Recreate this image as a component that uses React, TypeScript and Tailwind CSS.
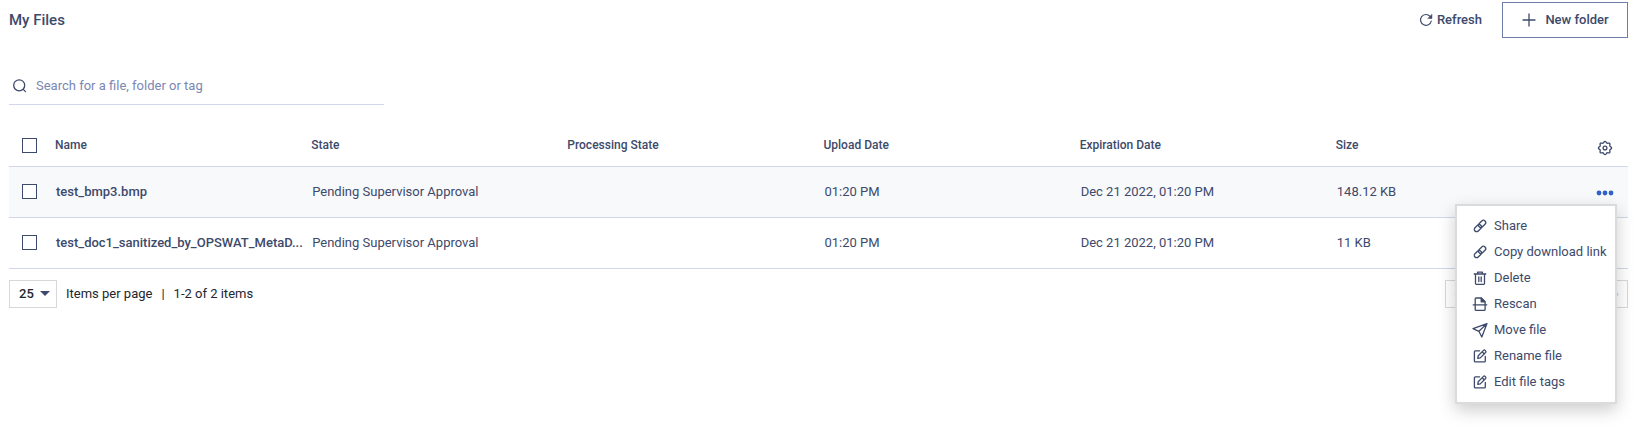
import { useState } from 'react'
import type { ReactNode } from 'react'

const Icon = ({ children, className = 'size-4' }: { children: ReactNode; className?: string }) => (
  <svg
    viewBox="0 0 16 16"
    fill="none"
    stroke="currentColor"
    strokeWidth="1.3"
    strokeLinecap="round"
    strokeLinejoin="round"
    aria-hidden="true"
    className={`shrink-0 ${className}`}
  >
    {children}
  </svg>
)

const RefreshIcon = () => (
  <Icon className="size-[14px]">
    <path d="M14 9.3A6.2 6.2 0 1 1 12.6 3.8L14 5.4" />
    <path d="M14.8 1.8v4.4h-4.4z" fill="currentColor" strokeWidth="0.6" />
  </Icon>
)

const PlusIcon = () => (
  <Icon>
    <path d="M8 2v12M2 8h12" />
  </Icon>
)

const SearchIcon = () => (
  <Icon>
    <circle cx="7.2" cy="7.3" r="5.5" />
    <path d="m11.3 11.4 2.2 2.2" />
  </Icon>
)

// Rounded gear outline: a circle whose radius swells at each of the 8 teeth
const gearPath = Array.from({ length: 96 }, (_, i) => {
  const angle = (i / 96) * Math.PI * 2
  const radius = 5.9 + 0.7 * Math.cos(angle * 8)
  return `${(8 + radius * Math.cos(angle)).toFixed(2)} ${(8 + radius * Math.sin(angle)).toFixed(2)}`
}).join('L')

const GearIcon = () => (
  <Icon>
    <path d={`M${gearPath}Z`} />
    <circle cx="8" cy="8" r="1.9" />
  </Icon>
)

const DotsIcon = () => (
  <Icon className="h-4 w-[18px]">
    <g fill="currentColor" stroke="none">
      <circle cx="2" cy="8" r="2.4" />
      <circle cx="8" cy="8" r="2.4" />
      <circle cx="14" cy="8" r="2.4" />
    </g>
  </Icon>
)

const LinkIcon = () => (
  <Icon>
    <g transform="rotate(-45 8 8)">
      <rect x="0.9" y="5.7" width="8.2" height="4.6" rx="2.3" />
      <rect x="6.9" y="5.7" width="8.2" height="4.6" rx="2.3" />
    </g>
  </Icon>
)

const TrashIcon = () => (
  <Icon>
    <path d="M2.2 4h11.6M5.6 3.8V2.1h4.8v1.7M3.5 4.2v9.3c0 .5.3.8.8.8h7.4c.5 0 .8-.3.8-.8V4.2M6.8 6.8v4.8M9.2 6.8v4.8" />
  </Icon>
)

const RescanIcon = () => (
  <Icon>
    <path d="M3.2 8.6V2.9c0-.5.4-.9.9-.9h5.2l3.8 3.8v2.8M1.2 8.8h13.6M3.2 9v4.4c0 .5.4.9.9.9h8.1c.5 0 .9-.4.9-.9V9" />
    <path d="M9.2 2.2v3.6h3.6z" fill="currentColor" />
  </Icon>
)

const PlaneIcon = () => (
  <Icon>
    <path d="M15 1.6 1 6.6l5.9 2.7L9.8 15zM15 1.6 6.9 9.3" />
  </Icon>
)

const EditIcon = () => (
  <Icon>
    <path d="M7.6 2.8H3.3c-.5 0-.9.4-.9.9v9.2c0 .5.4.9.9.9h9.1c.5 0 .9-.4.9-.9V8.4" />
    <path d="m5.8 10.4.4-2.6 5.3-5.4c.5-.5 1.1-.5 1.6 0l.5.5c.4.5.4 1.1 0 1.6L8.3 9.9zM10.4 4l1.7 1.7" />
  </Icon>
)

const columns = ['Name', 'State', 'Processing State', 'Upload Date', 'Expiration Date', 'Size']

const files = [
  {
    name: 'test_bmp3.bmp',
    state: 'Pending Supervisor Approval',
    upload: '01:20 PM',
    expiration: 'Dec 21 2022, 01:20 PM',
    size: '148.12 KB',
  },
  {
    name: 'test_doc1_sanitized_by_OPSWAT_MetaD...',
    state: 'Pending Supervisor Approval',
    upload: '01:20 PM',
    expiration: 'Dec 21 2022, 01:20 PM',
    size: '11 KB',
  },
]

const actions = [
  { label: 'Share', icon: <LinkIcon /> },
  { label: 'Copy download link', icon: <LinkIcon /> },
  { label: 'Delete', icon: <TrashIcon /> },
  { label: 'Rescan', icon: <RescanIcon /> },
  { label: 'Move file', icon: <PlaneIcon /> },
  { label: 'Rename file', icon: <EditIcon /> },
  { label: 'Edit file tags', icon: <EditIcon /> },
]

const Checkbox = ({ label }: { label: string }) => (
  <input
    type="checkbox"
    aria-label={label}
    className="ml-[13px] block size-[15px] appearance-none border border-[#3d4a6b] bg-white checked:bg-[#3d4a6b]"
  />
)

const FileMenu = () => (
  <ul className="absolute top-[37px] right-[11px] z-10 w-[162px] border-2 border-[#dadbdc] bg-white pt-[7px] pb-[7px] shadow-[0_6px_16px_rgba(0,0,0,0.2)]">
    {actions.map(({ label, icon }) => (
      <li key={label}>
        <button className="flex h-[26px] w-full items-center gap-[6px] pl-[15px] text-[13px] whitespace-nowrap hover:bg-[#f8f9fb]">
          {icon}
          {label}
        </button>
      </li>
    ))}
  </ul>
)

export default function App() {
  const [openMenu, setOpenMenu] = useState<string | null>('test_bmp3.bmp')

  return (
    <main className="min-h-screen bg-white pt-[2px] pr-[14px] pb-8 pl-[9px] font-['Roboto',sans-serif] text-[13px] text-[#3d4a6b]">
      <header className="flex h-9 items-center justify-between">
        <h1 className="text-[15px] font-medium">My Files</h1>
        <div className="flex items-center gap-5">
          <button className="flex items-center gap-1 font-medium">
            <RefreshIcon />
            Refresh
          </button>
          <button className="flex h-9 w-[126px] items-center justify-center gap-2 border border-[#6f7ca8] font-medium">
            <PlusIcon />
            New folder
          </button>
        </div>
      </header>

      <label className="mt-[29px] flex h-[38px] w-[375px] items-center gap-2 border-b border-[#d0d7e8] pl-[3px]">
        <SearchIcon />
        <input
          type="search"
          aria-label="Search"
          placeholder="Search for a file, folder or tag"
          className="w-full outline-none placeholder:text-[#7a87b3]"
        />
      </label>

      <table className="mt-5 w-full table-fixed border-collapse text-left">
        <thead>
          <tr className="h-[41px] border-b border-[#d0d7e8] text-[12px]">
            <th className="w-[46px]">
              <Checkbox label="Select all files" />
            </th>
            {columns.map((column) => (
              <th key={column} className="font-medium">
                {column}
              </th>
            ))}
            <th className="w-9">
              <button aria-label="Table settings" className="block pt-[6px] pl-[5px]">
                <GearIcon />
              </button>
            </th>
          </tr>
        </thead>
        <tbody>
          {files.map((file) => (
            <tr key={file.name} className="h-[51px] border-b border-[#d0d7e8] first:bg-[#f8f9fb]">
              <td>
                <Checkbox label={`Select ${file.name}`} />
              </td>
              <td className="truncate pl-px font-medium">{file.name}</td>
              <td className="pl-px">{file.state}</td>
              <td></td>
              <td className="pl-px">{file.upload}</td>
              <td className="pl-px">{file.expiration}</td>
              <td className="pl-px">{file.size}</td>
              <td className="relative">
                <button
                  aria-label={`Actions for ${file.name}`}
                  aria-expanded={openMenu === file.name}
                  className="block pt-[2px] pl-1 text-[#2f62c9]"
                  onClick={() => setOpenMenu(openMenu === file.name ? null : file.name)}
                >
                  <DotsIcon />
                </button>
                {openMenu === file.name && <FileMenu />}
              </td>
            </tr>
          ))}
        </tbody>
      </table>

      <footer className="mt-[11px] flex h-7 items-center justify-between text-[#23262f]">
        <div className="flex items-center">
          <span className="relative">
            <select
              aria-label="Items per page"
              defaultValue="25"
              className="h-7 w-12 appearance-none border border-[#d7d8da] bg-white pl-[9px] font-medium"
            >
              <option>25</option>
              <option>50</option>
              <option>100</option>
            </select>
            <svg viewBox="0 0 10 5" aria-hidden="true" className="pointer-events-none absolute top-[11px] right-[7px] h-[5px] w-[10px]">
              <path d="M0 0h10L5 5z" fill="#3d4a6b" />
            </svg>
          </span>
          <span className="ml-[9px]">Items per page</span>
          <span className="mx-[9px]">|</span>
          <span>1-2 of 2 items</span>
        </div>
        <nav
          aria-label="Pagination"
          className="flex h-7 w-[183px] items-center justify-between border border-[#d7d8da] px-2 text-[#c3c6cc]"
        >
          <button aria-label="Previous page">‹</button>
          <button aria-label="Next page">›</button>
        </nav>
      </footer>
    </main>
  )
}
